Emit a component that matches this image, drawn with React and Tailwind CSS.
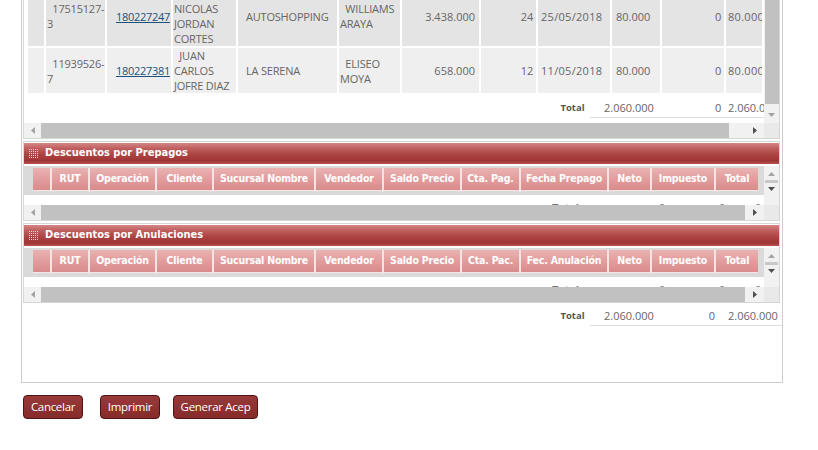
import React from 'react';

const rowCols = [18, 61, 66, 65, 101, 63, 79, 57, 74, 50, 64, 38];

const rows = [
  {
    bg: 'bg-[#e4e4e4]',
    h: 'h-[60px]',
    cells: [
      { t: '' },
      { t: '\u00a0\u00a017515127-\n3', c: 'justify-start pl-[1px]' },
      { t: '180227247', link: true, c: 'justify-start pl-[9px]' },
      { t: 'RAUL\nNICOLAS\nJORDAN\nCORTES', c: 'justify-start pl-[1px]' },
      { t: 'AUTOSHOPPING', c: 'justify-start pl-[8px]' },
      { t: '\u00a0\u00a0WILLIAMS\nARAYA', c: 'justify-start pl-[1px]' },
      { t: '3.438.000', c: 'justify-end pr-[4px] tracking-normal' },
      { t: '24', c: 'justify-end pr-[3px]' },
      { t: '25/05/2018', c: 'justify-start pl-[3px] tracking-[0.3px]' },
      { t: '80.000', c: 'justify-start pl-[4px] tracking-normal' },
      { t: '0', c: 'justify-end pr-[3px]' },
      { t: '80.000', c: 'justify-start pl-[2px] tracking-[0.3px]' },
    ],
  },
  {
    bg: 'bg-[#efefef]',
    h: 'h-[45px]',
    cells: [
      { t: '' },
      { t: '\u00a0\u00a011939526-\n7', c: 'justify-start pl-[1px]' },
      { t: '180227381', link: true, c: 'justify-start pl-[9px]' },
      { t: '\u00a0\u00a0JUAN\nCARLOS\nJOFRE DIAZ', c: 'justify-start pl-[1px]' },
      { t: 'LA SERENA', c: 'justify-start pl-[8px]' },
      { t: '\u00a0\u00a0ELISEO\nMOYA', c: 'justify-start pl-[1px]' },
      { t: '658.000', c: 'justify-end pr-[4px] tracking-normal' },
      { t: '12', c: 'justify-end pr-[3px]' },
      { t: '11/05/2018', c: 'justify-start pl-[3px] tracking-[0.3px]' },
      { t: '80.000', c: 'justify-start pl-[4px] tracking-normal' },
      { t: '0', c: 'justify-end pr-[3px]' },
      { t: '80.000', c: 'justify-start pl-[2px] tracking-[0.3px]' },
    ],
  },
];

const headWidths = [19, 38, 67, 57, 102, 68, 78, 59, 88, 43, 64, 42];

const Grip = () => (
  <svg width="9" height="9" viewBox="0 0 9 9" className="shrink-0">
    {[0, 2, 4, 6, 8].map((y) =>
      [0, 2, 4, 6, 8].map((x) => (
        <rect key={`${x}-${y}`} x={x} y={y} width="1" height="1" fill="#f3d2d2" />
      ))
    )}
  </svg>
);

const ArrowLeft = () => (
  <svg width="4" height="7" viewBox="0 0 4 7"><path d="M4 0 L0 3.5 L4 7 Z" fill="#a3a3a3" /></svg>
);
const ArrowRight = () => (
  <svg width="4" height="7" viewBox="0 0 4 7"><path d="M0 0 L4 3.5 L0 7 Z" fill="#505050" /></svg>
);
const ArrowUp = () => (
  <svg width="7" height="4" viewBox="0 0 7 4"><path d="M0 4 L3.5 0 L7 4 Z" fill="#a3a3a3" /></svg>
);
const ArrowDown = ({ dark }) => (
  <svg width="7" height="4" viewBox="0 0 7 4"><path d="M0 0 L3.5 4 L7 0 Z" fill={dark ? '#505050' : '#a3a3a3'} /></svg>
);

const HScroll = ({ thumb }) => (
  <div className="flex h-[15px]">
    <div className="w-[740px] flex bg-[#f1f1f1]">
      <div className="w-[17px] flex items-center justify-center"><ArrowLeft /></div>
      <div className="bg-[#c1c1c1]" style={{ width: thumb }} />
      <div className="flex-1 flex items-center justify-end pr-[7px]"><ArrowRight /></div>
    </div>
    <div className="w-[15px] bg-[#e9e9e9]" />
  </div>
);

function Section({ title, heads }) {
  return (
    <div className="mt-[2px] ml-[1px] w-[757px] border border-[#d6d6d6]">
      <div className="mt-[1px] h-[21px] flex items-center gap-[7px] pl-[5px] bg-[linear-gradient(to_bottom,#d58686_0%,#c06060_25%,#ad4444_55%,#9f3434_85%,#b65353_100%)]">
        <Grip />
        <span className="font-['DejaVu_Sans_Condensed'] font-bold text-[11px] tracking-normal text-white">{title}</span>
      </div>
      <div className="flex mt-[2px]">
        <div className="w-[740px]">
          <div className="h-[29px] bg-[#dadada] pl-[9px] pt-[2px]">
            <div className="flex h-[24px]">
              {heads.map((h, i) => (
                <div
                  key={i}
                  style={{ width: headWidths[i] }}
                  className="shrink-0 border-r-2 border-[#f4e4e4] last:border-r-0"
                >
                  <div className="h-[23px] border-b border-[#f6e6e6] flex items-center justify-center bg-[linear-gradient(to_bottom,#eab2b2_0%,#e29d9d_50%,#d98b8b_100%)] font-['DejaVu_Sans_Condensed'] font-bold text-[10.5px] tracking-[-0.2px] text-white whitespace-nowrap overflow-hidden">
                    {h}
                  </div>
                </div>
              ))}
            </div>
          </div>
          <div className="h-[10px] overflow-hidden bg-white">
            <div className="flex pt-[5px] leading-[15px] text-[11px] text-[#777]">
              <div className="w-[528px]" />
              <div className="w-[40px] font-bold">Total</div>
              <div className="w-[73px] text-right">0</div>
              <div className="w-[60px] text-right">0</div>
              <div className="w-[36px] text-right">0</div>
            </div>
          </div>
        </div>
        <div className="w-[15px] h-[39px] bg-[#f1f1f1] flex flex-col items-center pt-[6px]">
          <ArrowUp />
          <div className="mt-[4px] w-[13px] h-[3px] bg-[#c8c8c8]" />
          <div className="mt-[4px]"><ArrowDown dark /></div>
        </div>
      </div>
      <HScroll thumb={704} />
    </div>
  );
}

export default function App() {
  return (
    <div className="w-[818px] h-[450px] overflow-hidden bg-white font-['Open_Sans'] text-[11px] tracking-[-0.2px] text-[#666]">
      <div className="-mt-[14px]">
        <div className="ml-[21px] w-[762px] h-[397px] border border-t-0 border-[#cdcdcd]">
          {/* first grid, scrolled */}
          <div className="ml-[1px] w-[757px] border-x border-b border-[#d6d6d6]">
            <div className="flex">
              <div className="w-[740px] flex flex-col">
                <div className="pl-[4px] flex flex-col gap-[2px]">
                  {rows.map((r, ri) => (
                    <div key={ri} className={`flex ${r.h} ${r.bg} w-[736px] overflow-hidden`}>
                      {r.cells.map((c, ci) => (
                        <div
                          key={ci}
                          style={{ width: rowCols[ci] }}
                          className={`shrink-0 h-full border-r-2 border-white flex items-center overflow-hidden whitespace-pre leading-[15px] ${c.c || ''}`}
                        >
                          {c.link ? (
                            <span className="text-[#1d4f7c] underline tracking-[-0.3px]">{c.t}</span>
                          ) : (
                            <span>{c.t}</span>
                          )}
                        </div>
                      ))}
                    </div>
                  ))}
                </div>
                <div className="h-[30px] flex leading-[15px]">
                  <div className="w-[531px]" />
                  <div className="w-[35px] mt-[7px] h-[18px] text-[9.5px] tracking-normal font-bold text-[#555] text-center">Total</div>
                  <div className="w-[174px] mt-[7px] h-[18px] flex border-b border-[#dedede]">
                    <div className="w-[72px] pl-[14px] tracking-normal">2.060.000</div>
                    <div className="w-[62px] text-right pr-[3px]">0</div>
                    <div className="w-[40px] pl-[4px] overflow-hidden whitespace-nowrap tracking-normal">2.060.000</div>
                  </div>
                </div>
              </div>
              <div className="w-[15px] bg-[#f1f1f1] flex flex-col items-center">
                <div className="w-[14px] h-[118px] bg-[#c1c1c1]" />
                <div className="mt-[9px]"><ArrowDown /></div>
              </div>
            </div>
            <HScroll thumb={688} />
          </div>

          <Section
            title="Descuentos por Prepagos"
            heads={['', 'RUT', 'Operación', 'Cliente', 'Sucursal Nombre', 'Vendedor', 'Saldo Precio', 'Cta. Pag.', 'Fecha Prepago', 'Neto', 'Impuesto', 'Total']}
          />
          <div className="mt-[1px]" />
          <Section
            title="Descuentos por Anulaciones"
            heads={['', 'RUT', 'Operación', 'Cliente', 'Sucursal Nombre', 'Vendedor', 'Saldo Precio', 'Cta. Pac.', 'Fec. Anulación', 'Neto', 'Impuesto', 'Total']}
          />

          <div className="flex pt-[2px] leading-[15px]">
            <div className="w-[533px]" />
            <div className="w-[35px] h-[21px] flex items-center justify-center text-[9.5px] tracking-normal font-bold text-[#555]">Total</div>
            <div className="w-[192px] h-[21px] flex items-center border-b border-[#dedede] tracking-normal">
              <div className="w-[72px] pl-[14px]">2.060.000</div>
              <div className="w-[55px] text-right pr-[2px]">0</div>
              <div className="w-[65px] pl-[11px]">2.060.000</div>
            </div>
          </div>
        </div>

        <div className="flex mt-[12px] ml-[23px] text-[11.5px] tracking-[-0.3px] text-white">
          <button className="w-[60px] h-[24px] rounded-[4px] border border-[#4e1414] bg-[linear-gradient(to_bottom,#983a3a,#862a2a)]">Cancelar</button>
          <button className="ml-[17px] w-[60px] h-[24px] rounded-[4px] border border-[#4e1414] bg-[linear-gradient(to_bottom,#983a3a,#862a2a)]">Imprimir</button>
          <button className="ml-[13px] w-[85px] h-[24px] rounded-[4px] border border-[#4e1414] bg-[linear-gradient(to_bottom,#983a3a,#862a2a)]">Generar Acep</button>
        </div>
      </div>
    </div>
  );
}
